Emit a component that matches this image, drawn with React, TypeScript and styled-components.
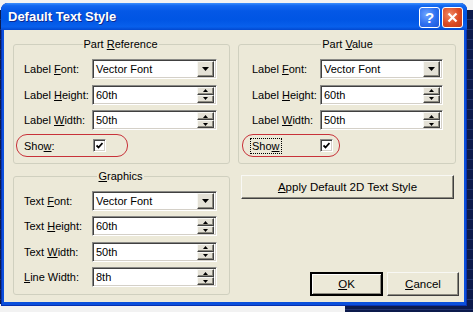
import styled, { createGlobalStyle } from 'styled-components';

const GlobalStyle = createGlobalStyle`
  html, body {
    margin: 0;
    padding: 0;
  }
  body {
    width: 473px;
    height: 312px;
    overflow: hidden;
    font-family: "Liberation Sans", Arial, sans-serif;
    font-size: 11px;
    color: #000;
  }
`;

const Desktop = styled.div`
  width: 473px;
  height: 312px;
  box-sizing: border-box;
  padding: 3px 0 0 1px;
  background:
    linear-gradient(#f2f2f2, #f2f2f2) left top / 100% 10px no-repeat,
    linear-gradient(#f2f2f2, #f2f2f2) left bottom / 345px 8px no-repeat,
    repeating-linear-gradient(to bottom, transparent 0 9px, #23336e 9px 10px),
    #0c1a4c;
`;

const Window = styled.div`
  width: 466px;
  height: 303px;
  display: flex;
  flex-direction: column;
  border-radius: 7px 7px 0 0;
  background: #0a4fdc;
  box-shadow: inset 1px 0 #0831b0, inset -1px 0 #0831b0, inset 0 -1px #0831b0;
  overflow: hidden;
`;

const TitleBar = styled.div`
  height: 27px;
  flex: none;
  display: flex;
  align-items: center;
  padding: 0 4px 0 7px;
  background: linear-gradient(
    to bottom,
    #3c8ffd 0%,
    #1166f0 10%,
    #0458e6 30%,
    #0055e4 60%,
    #0860ec 88%,
    #0248d0 100%
  );
`;

const Title = styled.div`
  color: #fff;
  font-weight: bold;
  font-size: 13px;
  text-shadow: 1px 1px #0b2a91;
  letter-spacing: 0;
`;

const Controls = styled.div`
  margin-left: auto;
  display: flex;
  gap: 2px;
  margin-top: 1px;
`;

const CaptionButton = styled.div<{ $close?: boolean }>`
  width: 21px;
  height: 21px;
  box-sizing: border-box;
  border: 1px solid #fff;
  border-radius: 3px;
  display: flex;
  align-items: center;
  justify-content: center;
  color: #fff;
  font-weight: bold;
  font-size: 15px;
  background: ${(p) =>
    p.$close
      ? 'radial-gradient(circle at 35% 35%, #f08a66, #dc4a23 55%, #c0391b)'
      : 'radial-gradient(circle at 35% 35%, #6fa5ff, #2d6ff0 55%, #1b55d6)'};
`;

const Body = styled.div`
  flex: 1;
  margin: 0 3px 4px 3px;
  background: #ece9d8;
  box-sizing: border-box;
  padding: 8px 8px 6px 9px;
  display: grid;
  grid-template-columns: 217px 218px;
  column-gap: 8px;
`;

const Column = styled.div`
  display: flex;
  flex-direction: column;
`;

const Group = styled.fieldset<{ $padLeft: number }>`
  margin: 0;
  min-width: 0;
  border: 1px solid #d0d0bf;
  border-radius: 3px;
  padding: 8px 12px 7px ${(p) => p.$padLeft}px;
  display: flex;
  flex-direction: column;
  gap: 5.5px;

  & + & {
    margin-top: 6px;
  }
`;

const Legend = styled.legend`
  margin: 0 auto;
  padding: 0 1px;
  line-height: 13px;
`;

const U = styled.span`
  text-decoration: underline;
`;

const Row = styled.div`
  display: flex;
  align-items: center;
  height: 20px;
`;

const Label = styled.div`
  width: 68px;
  flex: none;
  white-space: nowrap;
`;

const ShowRow = styled.div<{ $width: number; $shift: number }>`
  display: flex;
  align-items: center;
  height: 23px;
  box-sizing: border-box;
  width: ${(p) => p.$width}px;
  margin: -1.5px 0 -1.5px -${(p) => p.$shift}px;
  padding-left: ${(p) => p.$shift - 1}px;
  border: 1px solid #c8323a;
  border-radius: 11px;
`;

const ShowLabel = styled.div<{ $width: number; $focus?: boolean }>`
  width: ${(p) => p.$width}px;
  flex: none;

  span.text {
    outline: ${(p) => (p.$focus ? '1px dotted #000' : 'none')};
    outline-offset: 1px;
  }
`;

const sunken = `
  box-sizing: border-box;
  background: #fff;
  border: 1px solid;
  border-color: #8a8a86 #fff #fff #8a8a86;
  box-shadow: inset 1px 1px #404040, inset -1px -1px #d4d0c8;
`;

const raised = `
  box-sizing: border-box;
  background: #e4e1d6;
  border: 1px solid;
  border-color: #f8f8f4 #404040 #404040 #f8f8f4;
  box-shadow: inset -1px -1px #8d8b80;
`;

const Field = styled.div`
  ${sunken}
  flex: 1;
  height: 20px;
  display: flex;
  align-items: center;
  padding: 0 2px 0 3px;
`;

const FieldText = styled.span`
  flex: 1;
  white-space: nowrap;
`;

const DropButton = styled.div`
  ${raised}
  width: 17px;
  height: 16px;
  display: flex;
  align-items: center;
  justify-content: center;
`;

const Spinner = styled.div`
  display: flex;
  flex-direction: column;
  width: 17px;
  height: 16px;
`;

const SpinButton = styled.div`
  ${raised}
  flex: 1;
  display: flex;
  align-items: center;
  justify-content: center;
`;

const CheckBox = styled.div`
  ${sunken}
  width: 13px;
  height: 13px;
  display: flex;
  align-items: center;
  justify-content: center;
`;

const PushButton = styled.div<{ $default?: boolean; $width?: number }>`
  ${raised}
  background: #ece9d8;
  height: 24px;
  width: ${(p) => (p.$width ? `${p.$width}px` : 'auto')};
  display: flex;
  align-items: center;
  justify-content: center;
  font-size: 11.5px;
  ${(p) =>
    p.$default &&
    `
    border: 2px solid #000;
    box-shadow: inset 1px 1px #fff, inset -1px -1px #8d8b80;
  `}
`;

const ApplyButton = styled(PushButton)`
  margin: 11px 2px 0 3px;
`;

const ButtonRow = styled.div`
  margin-top: auto;
  margin-right: -3px;
  display: flex;
  justify-content: flex-end;
  gap: 4px;
`;

const Arrow = ({ up }: { up?: boolean }) => (
  <svg width="7" height="4" viewBox="0 0 7 4">
    <path d={up ? 'M0 4 L3.5 0 L7 4 Z' : 'M0 0 L7 0 L3.5 4 Z'} fill="#000" />
  </svg>
);

const SmallArrow = ({ up }: { up?: boolean }) => (
  <svg width="5" height="3" viewBox="0 0 5 3">
    <path d={up ? 'M0 3 L2.5 0 L5 3 Z' : 'M0 0 L5 0 L2.5 3 Z'} fill="#000" />
  </svg>
);

const Combo = ({ value }: { value: string }) => (
  <Field>
    <FieldText>{value}</FieldText>
    <DropButton>
      <Arrow />
    </DropButton>
  </Field>
);

const SpinField = ({ value }: { value: string }) => (
  <Field>
    <FieldText>{value}</FieldText>
    <Spinner>
      <SpinButton>
        <SmallArrow up />
      </SpinButton>
      <SpinButton>
        <SmallArrow />
      </SpinButton>
    </Spinner>
  </Field>
);

const Check = () => (
  <CheckBox>
    <svg width="7" height="7" viewBox="0 0 7 7">
      <path d="M0.5 3.5 L2.5 5.5 L6.5 1" stroke="#000" strokeWidth="1.8" fill="none" />
    </svg>
  </CheckBox>
);

// label text with one underlined access key
const Key = ({ before, k, after }: { before?: string; k: string; after?: string }) => (
  <>
    {before}
    <U>{k}</U>
    {after}
  </>
);

export default function App() {
  return (
    <>
      <GlobalStyle />
      <Desktop>
        <Window>
          <TitleBar>
            <Title>Default Text Style</Title>
            <Controls>
              <CaptionButton>?</CaptionButton>
              <CaptionButton $close>
                <svg width="11" height="11" viewBox="0 0 11 11">
                  <path d="M1.5 1.5 L9.5 9.5 M9.5 1.5 L1.5 9.5" stroke="#fff" strokeWidth="2.2" />
                </svg>
              </CaptionButton>
            </Controls>
          </TitleBar>
          <Body>
            <Column>
              <Group $padLeft={10}>
                <Legend>
                  <Key before="Part " k="R" after="eference" />
                </Legend>
                <Row>
                  <Label>
                    <Key before="Label " k="F" after="ont:" />
                  </Label>
                  <Combo value="Vector Font" />
                </Row>
                <Row>
                  <Label>
                    <Key before="Label " k="H" after="eight:" />
                  </Label>
                  <SpinField value="60th" />
                </Row>
                <Row>
                  <Label>
                    <Key before="Label " k="W" after="idth:" />
                  </Label>
                  <SpinField value="50th" />
                </Row>
                <ShowRow $width={112} $shift={8}>
                  <ShowLabel $width={69}>
                    <span className="text">
                      <Key before="Sho" k="w" after=":" />
                    </span>
                  </ShowLabel>
                  <Check />
                </ShowRow>
              </Group>
              <Group $padLeft={10}>
                <Legend>
                  <Key k="G" after="raphics" />
                </Legend>
                <Row>
                  <Label>
                    <Key before="Text " k="F" after="ont:" />
                  </Label>
                  <Combo value="Vector Font" />
                </Row>
                <Row>
                  <Label>
                    <Key before="Text " k="H" after="eight:" />
                  </Label>
                  <SpinField value="60th" />
                </Row>
                <Row>
                  <Label>
                    <Key before="Text " k="W" after="idth:" />
                  </Label>
                  <SpinField value="50th" />
                </Row>
                <Row>
                  <Label>
                    <Key k="L" after="ine Width:" />
                  </Label>
                  <SpinField value="8th" />
                </Row>
              </Group>
            </Column>
            <Column>
              <Group $padLeft={13}>
                <Legend>
                  <Key before="Part " k="V" after="alue" />
                </Legend>
                <Row>
                  <Label>
                    <Key before="Label " k="F" after="ont:" />
                  </Label>
                  <Combo value="Vector Font" />
                </Row>
                <Row>
                  <Label>
                    <Key before="Label " k="H" after="eight:" />
                  </Label>
                  <SpinField value="60th" />
                </Row>
                <Row>
                  <Label>
                    <Key before="Label " k="W" after="idth:" />
                  </Label>
                  <SpinField value="50th" />
                </Row>
                <ShowRow $width={98} $shift={10}>
                  <ShowLabel $width={68} $focus>
                    <span className="text">
                      <Key before="Sho" k="w" />
                    </span>
                  </ShowLabel>
                  <Check />
                </ShowRow>
              </Group>
              <ApplyButton>
                <Key k="A" after="pply Default 2D Text Style" />
              </ApplyButton>
              <ButtonRow>
                <PushButton $default $width={73}>
                  <Key k="O" after="K" />
                </PushButton>
                <PushButton $width={72}>
                  <Key k="C" after="ancel" />
                </PushButton>
              </ButtonRow>
            </Column>
          </Body>
        </Window>
      </Desktop>
    </>
  );
}
